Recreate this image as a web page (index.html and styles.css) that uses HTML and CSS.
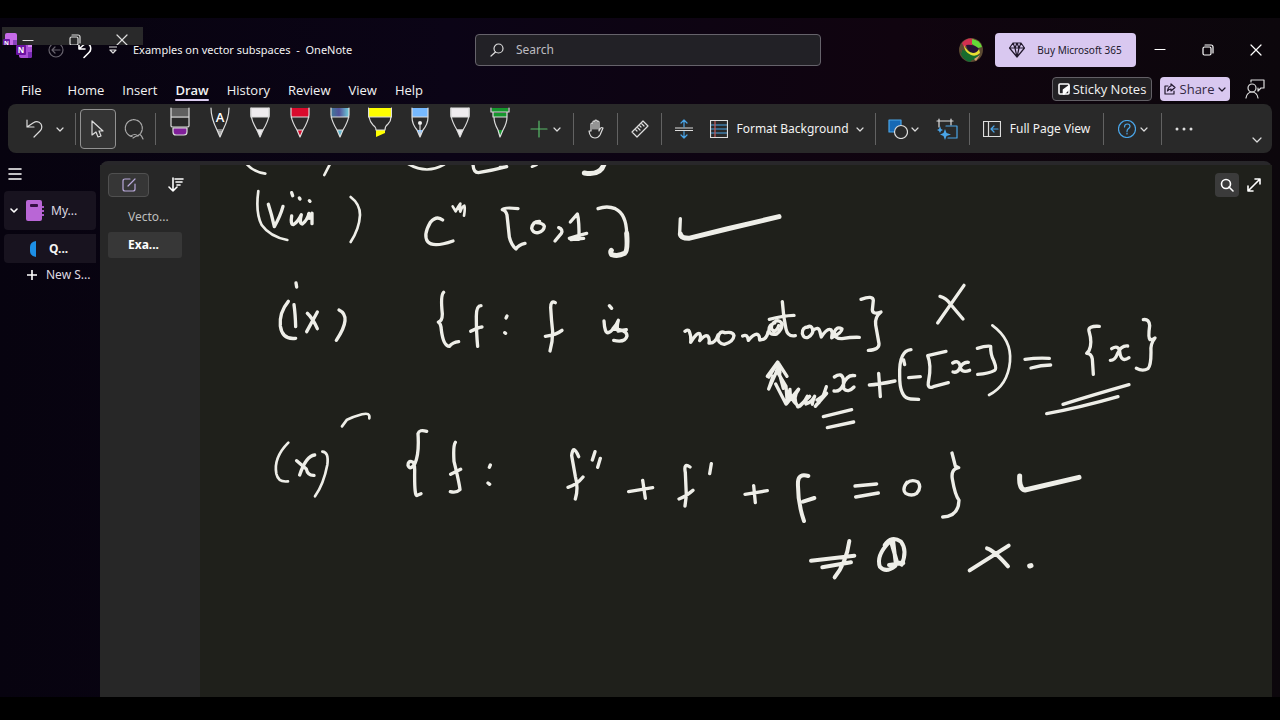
FILE: index.html
```html
<!DOCTYPE html>
<html lang="en">
<head>
<meta charset="utf-8">
<title>Examples on vector subspaces - OneNote</title>
<link rel="stylesheet" href="styles.css">
</head>
<body>
<div class="app">
  <header class="titlebar">
    <div class="title-left">
      <svg class="logo" width="16" height="16" viewBox="0 0 16 16"><rect x="3" width="13" height="16" rx="2" fill="#a94fd6"/><path d="M12 0h2a2 2 0 0 1 2 2v3h-4z" fill="#d58af4"/><path d="M12 10h4v4a2 2 0 0 1-2 2h-2z" fill="#7a2bb5"/><rect y="3" width="10" height="10" rx="1" fill="#6a11a0"/><text x="5" y="11" class="logo-n">N</text></svg>
      <button class="plain back" aria-label="Back"><svg width="16" height="16" viewBox="0 0 16 16" class="ln dim"><circle cx="8" cy="8" r="7"/><path d="M12 8H4M7 5 4 8l3 3"/></svg></button>
      <button class="plain undo-top" aria-label="Undo"><svg width="18" height="18" viewBox="0 0 18 18" class="ln thick"><path d="M3 2v6h6M3 8 8 3.500q4-2 6 1 2 4-1 7l-5 5"/></svg></button>
      <button class="plain more-top" aria-label="Customize toolbar"><svg width="8" height="8" viewBox="0 0 8 8" class="ln"><path d="M0 1h8M1 4h6L4 7z"/></svg></button>
      <span class="doc-title">Examples on vector subspaces&nbsp; -&nbsp; OneNote</span>
    </div>
    <label class="search">
      <svg width="14" height="14" viewBox="0 0 14 14" class="ln"><circle cx="8.500" cy="5.500" r="4.500"/><path d="M5.500 9 1 13"/></svg>
      <input type="text" placeholder="Search" aria-label="Search">
    </label>
    <div class="title-right">
      <svg class="avatar" width="24" height="24" viewBox="0 0 24 24"><circle cx="12" cy="12" r="12" fill="#5c4a32"/><path d="M3 5Q8-1 15 1l-2 6-8 2z" fill="#d32f50"/><path d="M13 1q8 1 10 8l-4 1-6-4z" fill="#64d838"/><path d="M7 7q8-1 13 4l-2 7Q9 15 7 7z" fill="#261235"/><path d="M1 13q5 8 13 8l-3 3Q3 22 1 13z" fill="#146b32"/><path d="M3 12q8 1 17 6l-5 4q-8 0-12-6z" fill="#176b2d"/><path d="M5 7q3 7 9 8 4 0 6-4l1 4q-4 4-9 2-7-3-7-10z" fill="#e8df32"/><path d="M15 21l6-4-4 6z" fill="#db9c70"/></svg>
      <button class="buy"><svg width="16" height="16" viewBox="0 0 16 16" class="ln dark"><path d="M4 1h8l3.500 5L8 15 .5 6zM.5 6h15M4 1l2 5 2 9 2-9 2-5M6 6l2-5 2 5"/></svg>Buy Microsoft 365</button>
      <button class="win" aria-label="Minimize"><svg width="12" height="12" viewBox="0 0 12 12" class="ln"><path d="M1 5.500h10"/></svg></button>
      <button class="win" aria-label="Restore"><svg width="12" height="12" viewBox="0 0 12 12" class="ln"><rect x="1" y="3" width="8" height="8" rx="1.500"/><path d="M3 1h6q2 0 2 2v6"/></svg></button>
      <button class="win" aria-label="Close"><svg width="12" height="12" viewBox="0 0 12 12" class="ln"><path d="m1 1 10 10M11 1 1 11"/></svg></button>
    </div>
    <div class="ghost">
      <svg width="14" height="14" viewBox="0 0 14 14"><rect x="2" width="12" height="13" rx="2" fill="#c66be9"/><path d="M10 7h4v6h-4z" fill="#8a42bd"/><rect y="6" width="7" height="7" rx="1" fill="#6515a0"/><text x="3.500" y="12" class="logo-n mini">N</text></svg>
      <svg width="12" height="12" viewBox="0 0 12 12" class="ln"><path d="M1 6.500h10"/></svg>
      <svg width="12" height="12" viewBox="0 0 12 12" class="ln"><rect x="1" y="3" width="8" height="8" rx="1.500"/><path d="M3 1h6q2 0 2 2v6"/></svg>
      <svg width="12" height="12" viewBox="0 0 12 12" class="ln"><path d="m1 1 10 10M11 1 1 11"/></svg>
    </div>
  </header>

  <div class="menubar">
    <nav class="tabs">
      <button class="tab tab-file">File</button><button class="tab">Home</button><button class="tab">Insert</button><button class="tab active">Draw</button><button class="tab">History</button><button class="tab">Review</button><button class="tab">View</button><button class="tab">Help</button>
    </nav>
    <div class="menu-actions">
      <button class="sticky"><svg width="12" height="12" viewBox="0 0 12 12" class="ln thick"><rect x="1" y="1" width="10" height="10" rx="1"/><path d="M5.500 11V7L11 3v3l-5 5z" fill="#fff"/></svg>Sticky Notes</button>
      <button class="share"><svg width="12" height="12" viewBox="0 0 12 12" class="ln dark"><path d="M4 3H1v8h9V8"/><path d="M7 1v2Q4 4 3.500 8 5 6 7 6v2l4-3.500z"/></svg>Share<svg width="8" height="8" viewBox="0 0 8 8" class="ln dark"><path d="m1 3 3 3 3-3"/></svg></button>
      <button class="plain people" aria-label="Feedback"><svg width="20" height="20" viewBox="0 0 20 20" class="ln"><circle cx="7" cy="9" r="4"/><path d="M1 19q1-6 6-6t6 6M6 3V1h13v8h-3l-3 3V9"/></svg></button>
    </div>
  </div>

  <div class="ribbon">
    <button class="tool w28" aria-label="Undo"><svg width="20" height="20" viewBox="0 0 20 20" class="ln"><path d="M3 1v7h7M3 8l6-4q5-3 8 1 2 4-1 7l-6 6"/></svg></button>
    <button class="tool w24" aria-label="Undo history"><svg width="8" height="8" viewBox="0 0 8 8" class="ln"><path d="m1 3 3 3 3-3"/></svg></button>
    <i class="sep"></i>
    <button class="tool select" aria-label="Select"><svg width="16" height="20" viewBox="0 0 16 20" class="ln"><path d="M2 2v14l4-3 2 5 3-1-2-5h4z"/></svg></button>
    <button class="tool lasso" aria-label="Lasso select"><svg width="22" height="22" viewBox="0 0 22 22" class="ln soft"><path d="M9 18.500A8.500 8.500 0 1 1 17 16" stroke-dasharray="3 1"/><path d="M8 18q4-3 7 0 2-4 5 3M10 20q3-2 4-2"/></svg></button>
    <i class="sep"></i>
    <div class="pens">
      <button class="tool pen" aria-label="Eraser"><svg width="24" height="32" viewBox="0 0 24 32" class="ln"><path d="M3 1h18v10H3z" fill="#606060" stroke="none"/><path d="M5 21h14v4q0 3-3 3H8q-3 0-3-3z" fill="#80209a"/><path d="M3 1v18q0 1 2 1h14q2 0 2-1V1M3 10h18"/></svg></button>
      <button class="tool pen" aria-label="Text pen"><svg width="24" height="32" viewBox="0 0 24 32" class="ln"><path d="M9.500 24h5L12 30z" fill="#aaa" stroke="none"/><path d="M3 1q0 10 6 22h6q6-12 6-22M9 23l3 7 3-7"/><text x="12" y="15" class="pen-a">A</text></svg></button>
      <button class="tool pen" aria-label="White pen"><svg width="24" height="32" viewBox="0 0 24 32" class="ln"><path d="M3 1h18v9H3zM9 23h6l-3 7z" fill="#efecef"/><path d="M3 1v7q1 7 6 15h6q5-8 6-15V1"/></svg></button>
      <button class="tool pen" aria-label="Red pen"><svg width="24" height="32" viewBox="0 0 24 32" class="ln"><path d="M3 1h18v9H3zM9 23h6l-3 7z" fill="#d90a2c" stroke="none"/><path d="M3 1v7q1 7 6 15h6q5-8 6-15V1M3 10h18M9 23l3 7 3-7"/></svg></button>
      <button class="tool pen" aria-label="Galaxy pen"><svg width="24" height="32" viewBox="0 0 24 32" class="ln"><defs><linearGradient id="galaxy"><stop stop-color="#417b9b"/><stop offset=".45" stop-color="#52509a"/><stop offset="1" stop-color="#71d1dc"/></linearGradient></defs><path d="M3 1h18v9H3z" fill="url(#galaxy)" stroke="none"/><path d="M9 23h6l-3 7z" fill="#62b8d0" stroke="none"/><path d="M3 1v7q1 7 6 15h6q5-8 6-15V1M3 10h18M9 23l3 7 3-7"/></svg></button>
      <button class="tool pen" aria-label="Yellow highlighter"><svg width="24" height="32" viewBox="0 0 24 32" class="ln"><path d="M0 1h24v9H0zM8 23h9v3l-9 4z" fill="#ffff00" stroke="none"/><path d="M.5 1v9h23V1M1 10q1 5 4 8 3 2 3 5h9q0-4 3-6 3-3 3-7"/></svg></button>
      <button class="tool pen" aria-label="Fountain pen"><svg width="24" height="32" viewBox="0 0 24 32" class="ln"><path d="M4 1h16v9H4zM9 23h6l-3 7z" fill="#76b9ff" stroke="none"/><path d="M4 1v9h16V1M4 10q0 7 5 13l3 7 3-7q5-6 5-13M12 18v11"/><circle cx="12" cy="16" r="1.500" fill="#fff"/></svg></button>
      <button class="tool pen" aria-label="White pen 2"><svg width="24" height="32" viewBox="0 0 24 32" class="ln"><path d="M3 1h18v9H3zM9 23h6l-3 7z" fill="#efecef"/><path d="M3 1v7q1 7 6 15h6q5-8 6-15V1"/></svg></button>
      <button class="tool pen" aria-label="Green pen"><svg width="24" height="32" viewBox="0 0 24 32" class="ln"><path d="M4 1h16v4H4zM5 6h14v4H5zM10 23h5l-3 7z" fill="#15962d" stroke="none"/><path d="M3 1v4h18V1M5 5v5h14V5M6 10q0 6 4 13l2 7 3-7q4-7 4-13"/></svg></button>
    </div>
    <button class="tool add" aria-label="Add pen"><svg width="18" height="18" viewBox="0 0 18 18" class="ln green"><path d="M9 1v16M1 9h16"/></svg><svg width="8" height="8" viewBox="0 0 8 8" class="ln"><path d="m1 3 3 3 3-3"/></svg></button>
    <i class="sep"></i>
    <button class="tool" aria-label="Pan"><svg width="16" height="20" viewBox="0 0 16 20" class="ln"><path d="M3 12V5q0-1 1-1t1 1v5V3q0-1 1-1t1 1v7V2q0-1 1-1t1 1v8V3q0-1 1-1t1 1v9l1-2q1-2 3-1l-3 7q-2 3-5 3-5 0-6-7z"/></svg></button>
    <i class="sep"></i>
    <button class="tool" aria-label="Ruler"><svg width="20" height="20" viewBox="0 0 20 20" class="ln"><path d="m2 13 11-11 5 5L7 18zM5 10l2 2M7 8l3 3M9 6l2 2M11 4l3 3"/></svg></button>
    <i class="sep"></i>
    <button class="tool" aria-label="Insert space"><svg width="18" height="20" viewBox="0 0 18 20" class="ln"><path d="M0 9h18M0 11.500h18"/><path class="blue" d="M9 8V1M6 4l3-3 3 3M9 12.500V19M6 16l3 3 3-3"/></svg></button>
    <button class="tool format"><svg width="18" height="18" viewBox="0 0 18 18" class="ln"><path class="blue" d="M1 5h16M1 9h16M1 13h16"/><path class="red" d="M5 1v16"/><rect x=".5" y=".5" width="17" height="17"/></svg>Format Background<svg width="8" height="8" viewBox="0 0 8 8" class="ln"><path d="m1 3 3 3 3-3"/></svg></button>
    <i class="sep"></i>
    <button class="tool shapes" aria-label="Shapes"><svg width="20" height="20" viewBox="0 0 20 20" class="ln"><rect x="1" y="1" width="12" height="12" fill="#1769b5" class="blue"/><circle cx="13" cy="13" r="6.500" fill="#292929"/></svg><svg width="8" height="8" viewBox="0 0 8 8" class="ln"><path d="m1 3 3 3 3-3"/></svg></button>
    <button class="tool convert" aria-label="Ink to shape"><svg width="22" height="22" viewBox="0 0 22 22" class="ln"><path d="M1 3h16M3 1v8M15 1v6"/><path class="blue" d="M10 8h11v12H12"/><path d="m9 11 1.500 4L15 16.500 10.500 18 9 22l-1.500-4L4 16.500 7.500 15zM4 8l1 3 2 1-2 1-1 2-1-2-2-1 2-1z" fill="#4aa5e8" stroke="none"/></svg></button>
    <i class="sep"></i>
    <button class="tool fullpage"><svg width="18" height="18" viewBox="0 0 18 18" class="ln"><rect x=".5" y="1.500" width="17" height="15"/><path d="M5.500 2v14"/><path class="blue" d="M15 9H8M11 6 8 9l3 3"/></svg>Full Page View</button>
    <i class="sep"></i>
    <button class="tool help" aria-label="Help"><svg width="18" height="18" viewBox="0 0 18 18" class="ln"><g class="blue"><circle cx="9" cy="9" r="8.500"/><path d="M6.500 7q0-3 3-3 2.500 0 2.500 2.500 0 1-2 2.500-1 1-1 2.500M9 13v1"/></g></svg><svg width="8" height="8" viewBox="0 0 8 8" class="ln"><path d="m1 3 3 3 3-3"/></svg></button>
    <i class="sep"></i>
    <button class="tool" aria-label="More options"><svg width="18" height="4" viewBox="0 0 18 4" fill="#ddd"><circle cx="2" cy="2" r="1.500"/><circle cx="9" cy="2" r="1.500"/><circle cx="16" cy="2" r="1.500"/></svg></button>
    <button class="tool collapse" aria-label="Collapse ribbon"><svg width="10" height="8" viewBox="0 0 10 8" class="ln"><path d="m1 2 4 4 4-4"/></svg></button>
  </div>

  <main class="workspace">
    <aside class="notebooks">
      <button class="plain burger" aria-label="Navigation"><svg width="14" height="12" viewBox="0 0 14 12" class="ln thick"><path d="M1 1h12M1 6h12M1 11h12"/></svg></button>
      <button class="book"><svg width="8" height="8" viewBox="0 0 8 8" class="ln thick"><path d="m1 2 3 3 3-3"/></svg><svg width="18" height="22" viewBox="0 0 18 22"><rect width="16" height="21" rx="2" fill="#b966d6"/><rect x="4" y="4" width="8" height="3" rx="1" fill="#351144"/><path d="M17 6v2M17 10v2M17 14v2" stroke="#a95ac7" stroke-width="2"/></svg><span>My...</span></button>
      <button class="section"><svg width="6" height="16" viewBox="0 0 6 16"><path d="M6 0Q0 1 0 6v4q0 5 6 6z" fill="#1d8fe6"/></svg><span>Q...</span></button>
      <button class="new-section"><svg width="10" height="10" viewBox="0 0 10 10" class="ln thick"><path d="M5 0v10M0 5h10"/></svg><span>New S...</span></button>
    </aside>
    <div class="notebody">
      <aside class="pages">
        <div class="page-tools">
          <button class="new-page" aria-label="Add page"><svg width="14" height="14" viewBox="0 0 14 14" class="ln lilac"><path d="M8 1H3Q1 1 1 3v8q0 2 2 2h8q2 0 2-2V6M6 8l7-7"/></svg></button>
          <button class="plain sort" aria-label="Sort pages"><svg width="16" height="16" viewBox="0 0 16 16" class="ln thick"><path d="M5 1v13M1 10l4 4 4-4M7 2h8M8 5h6M9 8h3"/></svg></button>
        </div>
        <button class="page">Vecto...</button>
        <button class="page current">Exa...</button>
      </aside>
      <section class="canvas">
        <svg class="ink" width="1072" height="532" viewBox="200 165 1072 532" role="img" aria-label="Handwritten list of function sets">
          <g transform="translate(240 160) scale(.33333)">
            <path d="M20 12Q40 36 76 41M270 12 253 45M505 12Q560 44 612 14"/>
            <path class="bold" d="M699 12Q700 38 715 38 755 32 800 20"/>
            <path d="M55 93Q46 158 65 195 90 230 142 240M332 111Q360 132 360 165 358 206 332 246"/>
            <path class="bold" d="M85 133Q95 164 103 200 121 168 129 139M155 98l3 9M178 114l2 3M208 122l2 2M155 168Q151 194 160 194 174 185 184 164 177 192 187 192 202 180 207 160 203 190 216 160V191"/>
            <path class="bold" d="M608 180Q590 165 571 187 549 225 563 245 579 264 639 243"/>
            <path d="M638 139l9 15q8-15 14-23-3 18 0 24 4-14 12-18 3 8-1 30"/>
            <path class="bold" d="M834 146Q790 141 787 149 797 151 801 165L808 231q6 25 20 36 7-12 27-17"/>
            <path class="bold" d="M168 369l2 12M145 424Q117 458 121 498 127 540 167 535M162 434q4 28 5 66M232 456 200 515M202 460Q218 475 232 506M297 450Q337 469 289 541"/>
            <path class="bold" d="M611 397q-10 9-4 65 0 21-12 24 8 5 9 24 6 48 24 49 10-12 28-14M723 437q-14 0-14 32 0 51 4 90M692 514q23-12 34-13M801 468l-3 6M794 518l3 2"/>
          </g>
          <g transform="translate(500 160) scale(.33333)">
            <path d="M96 20 110 14M0 21h12"/><path class="heavy" d="M253 39Q302 48 313 10"/>
            <path class="bold" d="M119 184Q98 183 95 205 99 220 115 218 132 213 133 199 130 189 108 188M176 203q14 5 8 17l-19 23M211 186 232 162q6 21 5 76M208 235q27-9 52-15M213 239l38-4"/>
            <path class="bold" d="M294 146Q321 136 346 146 379 162 380 220"/><path class="heavy" d="M380 220Q384 272 374 280 355 290 335 284q-5-8-1-13"/>
            <path class="bold" d="M541 176l-2 44q1 13 16 14"/><path class="heavy" d="M541 222q2 13 25 13L680 207 837 170"/>
            <path class="bold" d="M166 428q-14-8-14 15 2 37 6 72 0 30-8 58M136 529q34-5 50-18M328 437l7 8M312 483q2 37 13 35 16-6 30-37-6 22-1 32l25-4M353 488l-15 19q43 1 43 21-6 21-40 13"/>
            <path class="bold" d="M555 514q10-7 13 0 6 15 4 33 19-31 27-26 5 9 0 21 17-18 24-14 7 7 4 21 19 2 27-24M675 518q-17-8-21 16-1 15 19 19 27-7 29-26-3-13-25-9M728 528q15-7 17 13 17-20 27-18 7 3 7 17 21 0 25-24M847 425q3 45 11 82 5 24 28 20M808 478q39-11 74-12M824 489q-19 5-17 25 5 12 23 8 21-17 14-34-9-11-23 0-14 14 0 26 11-3 15-17"/>
          </g>
          <g transform="translate(740 270) scale(.33333)">
            <path class="bold" d="M205 171q-19 0-18 20 4 15 17 11 17-10 14-24-4-13-15-8M218 182q18-15 22 4l4 15q17-28 29-22 7 10 2 22M275 203q31-15 31-26-15-10-23 9 0 21 23 20 30-5 52-4M363 88Q399 75 400 91L397 120q2 15 26 6-20 16-16 39l10 56q1 19-32 20"/>
            <path class="bold" d="M600 79q19 5 31 23l38 45M672 46 593 159"/>
            <path class="bold" d="M114 277 86 321M82 319 113 276 141 319M113 280l7 28M86 357l28-62 16 60M86 357l13-38M110 302l28 47 4 50M107 342l31 60M150 358l-11 44 36-44M150 360q-2 26 26 50M176 358q-20 24-3 52 18-8 29-31-6 17-4 23 18-6 26-23-7 16-7 24M180 408l29-29M229 404q17-10 30-54M231 390l29-20-34 39"/>
            <path class="bold" d="M283 321q22-15 27 6l1 29q13 14 31-5M344 317q-23-4-34 26-9 23-28 20M388 345q25-1 77-12M416 310l5 70M250 440 335 419M262 473l79-17M513 239q-36 3-34 76-1 70 33 72l24 1M491 270l3 14M506 323l35-3M618 244 563 257Q575 286 566 331 560 359 580 350L625 338M638 279q17-10 22 7 1 25 29 15M685 277q-17-2-28 21-6 11-18 8M712 235q25-8 40-6-1 24 10 45 9 23 2 27-18 10-51 12"/>
            <path d="M757 166Q816 209 810 275 803 347 747 375"/>
            <path class="bold" d="M855 268q35-5 73-3M873 294q30-9 59-9M1078 169q-35-2-31 14 11 37 0 59l-7 8q14 0 17 17l3 46M1115 236q20-12 24 8 4 36 28 19M1163 228q-20-2-31 24-7 19-21 19M1210 149q18-3 19 18-5 35 1 42 10 0 15-5-15 18-12 43 0 40-9 49-16 9-35-1M920 431q99-18 214-51M969 403q93-29 198-59"/>
          </g>
          <g transform="translate(260 400) scale(.33333)">
            <path d="M246 79l15-20q20-9 45-16 25-7 22 12M85 128Q40 173 49 221q6 27 35 23M187 155q20 1 15 39-11 58-37 95"/>
            <path class="bold" d="M110 182l29 25q4 20 23 19M164 165q-26 3-45 60M500 94q-22-7-26 7 4 60-9 89-14 23-21 6 0-14 11-11 10 1 9 30-1 79 8 71l11-5M586 127q-7 10-4 57 16 65 18 85-11 11-29 6M572 223l30-15M691 195l-3 7M684 249l5 4M956 170q-17-40-21-3l11 62q10 36 0 68M924 262q27-8 45-31M1005 155l-8 25M1021 175l-8 27"/>
          </g>
          <g transform="translate(600 430) scale(.33333)">
            <path class="bold" d="M86 185 158 173M128 151l8 54M270 111q-20-14-14 17l3 68-4 32M237 207q24-9 42-26M334 101l-5 30M435 193l67-11M461 167l5 51M765 168l65-6M767 201l68-12M921 157q-16 22-4 33 18 10 33 0 16-18 4-34-20-10-34 4M1056 69l10 39 10 5q-24 4-19 34 8 48 20 64-1 48-49 50"/>
            <path class="medium" d="M625 138q-29-9-31 17-2 60 18 118M609 215l34-11"/>
            <path class="heavy" d="M1259 138q-2 40 16 42L1437 142"/>
            <path class="medium" d="M633 392 763 377M667 412 753 397M748 333q-9 65-44 109M869 335q-42 42-29 76 18 19 46-3M854 345q20-30 49-10 20 27 2 69M875 341l16 55M879 330l8 67 23 2-43 6M1161 355q22 7 63 54M1226 347 1109 421"/><path class="heavy" d="M1289 408l4-1"/>
          </g>
        </svg>
        <div class="canvas-tools">
          <button class="find" aria-label="Search page"><svg width="14" height="14" viewBox="0 0 14 14" class="ln thick"><circle cx="6" cy="6" r="4.500"/><path d="m9 9 4 4"/></svg></button>
          <button class="plain expand" aria-label="Expand"><svg width="14" height="14" viewBox="0 0 14 14" class="ln thick"><path d="M1 13 13 1M8 1h5v5M1 8v5h5"/></svg></button>
        </div>
      </section>
    </div>
  </main>
</div>
</body>
</html>
```
FILE: styles.css
```css
* { box-sizing: border-box; }
body {
  margin: 0;
  min-height: 100vh;
  padding: 18px 0 23px;
  display: flex;
  background: #000;
  color: #f2f2f2;
  font: 12px/16px "Noto Sans", "Open Sans", sans-serif;
}
button {
  display: inline-flex;
  align-items: center;
  margin: 0;
  padding: 0;
  border: 0;
  background: none;
  color: inherit;
  font: inherit;
  white-space: nowrap;
}
svg { display: block; flex: none; }
.plain, .win, .tool { justify-content: center; }
.ln { fill: none; stroke: #ddd; stroke-width: 1.2; stroke-linejoin: round; stroke-linecap: round; }
.thick { stroke: #fff; stroke-width: 1.6; }
.dark { stroke: #21182c; }
.dim { stroke: #67636d; }
.soft { stroke: #aaa; }
.green { stroke: #58bc69; }
.lilac { stroke: #b9a9db; }
.blue { stroke: #4aa5e8; }
.red { stroke: #c85b5b; }
.logo-n { font: bold 8px "Noto Sans", sans-serif; fill: #fff; text-anchor: middle; }
.mini { font-size: 6px; }
.pen-a { font: 600 13px "Open Sans", sans-serif; fill: #fff; stroke: none; text-anchor: middle; }

.app {
  flex: 1;
  min-width: 0;
  display: flex;
  flex-direction: column;
  background: linear-gradient(90deg, #07030f 0%, #0b0416 35%, #10040f 70%, #0c070c 100%);
}

/* Title bar */
.titlebar {
  position: relative;
  display: grid;
  grid-template-columns: minmax(0, 1fr) 346px minmax(0, 1fr);
  align-items: center;
  height: 59px;
  padding: 5px 0 0 16px;
}
.title-left { display: flex; align-items: center; }
.back { width: 16px; margin-left: 16px; }
.undo-top { width: 18px; margin-left: 12px; }
.more-top { width: 8px; margin: 0 16px 0 15px; }
.doc-title { white-space: nowrap; font-size: 11px; }
.search {
  display: flex;
  align-items: center;
  gap: 12px;
  height: 32px;
  padding: 0 14px;
  border: 1px solid #66636b;
  border-radius: 4px;
  background: #222126;
}
.search input {
  flex: 1;
  min-width: 0;
  padding: 0;
  border: 0;
  outline: 0;
  background: none;
  color: #fff;
  font: inherit;
}
.search input::placeholder { color: #bdbbc0; opacity: 1; }
.title-right { display: flex; align-items: center; justify-content: flex-end; }
.avatar { margin-right: 12px; }
.buy {
  justify-content: center;
  gap: 12px;
  width: 141px;
  height: 34px;
  border-radius: 4px;
  background: #d9c8f0;
  color: #21182c;
  font-size: 10px;
}
.win { width: 48px; height: 34px; }
.win .ln { stroke: #fff; }
.ghost {
  position: absolute;
  top: 9px;
  left: 2px;
  display: flex;
  align-items: center;
  width: 141px;
  height: 18px;
  padding: 7px 0 0 1px;
  overflow: hidden;
  background: #29292a;
}
.ghost svg { margin-right: 5px; }
.ghost svg + svg { margin-right: 35px; }

/* Tabs */
.menubar {
  display: flex;
  justify-content: space-between;
  height: 27px;
  padding: 0 14px 3px 12px;
}
.tabs, .menu-actions { display: flex; align-items: center; }
.tab { position: relative; height: 24px; padding: 2px 9px 0; font: 13px/16px "Open Sans", sans-serif; }
.tab-file { margin-right: 8px; }
.tab.active { font-weight: 600; }
.active::after {
  content: "";
  position: absolute;
  right: 9px;
  bottom: 0;
  left: 9px;
  height: 2px;
  border-radius: 1px;
  background: #dccdf0;
}
.sticky, .share { height: 24px; border-radius: 4px; justify-content: center; font: 13px/16px "Open Sans", sans-serif; }
.sticky { gap: 3px; width: 100px; border: 1px solid #636066; background: #232225; }
.share { gap: 4px; width: 70px; margin: 0 14px 0 8px; background: #d9c8f0; color: #332943; }
.people { width: 22px; }

/* Ribbon */
.ribbon {
  display: flex;
  align-items: center;
  height: 49px;
  margin: 0 8px;
  padding: 0 8px 0 12px;
  border-radius: 8px;
  background: #292929;
}
.tool { width: 37px; height: 40px; flex: none; }
.w28 { width: 28px; }
.w24 { width: 24px; }
.sep { flex: none; width: 1px; height: 32px; margin: 0 3px; background: #626262; }
.select { width: 36px; margin-left: 1px; border: 1px solid #929292; border-radius: 4px; background: #343434; }
.lasso { width: 36px; }
.pens { display: flex; align-items: center; margin-left: 1px; }
.pen { width: 40px; height: 44px; align-items: flex-start; }
.add { width: 50px; gap: 5px; }
.format { width: 170px; gap: 8px; }
.format svg:last-child { margin-left: -1px; }
.shapes { width: 48px; gap: 3px; }
.convert { width: 39px; }
.fullpage { width: 127px; gap: 9px; }
.help { width: 51px; gap: 4px; }
.collapse { width: 14px; margin-left: auto; padding-bottom: 5px; align-items: flex-end; }

/* Workspace */
.workspace { flex: 1; display: flex; margin: 8px 8px 0 0; min-height: 320px; }
.notebooks { flex: none; width: 100px; padding: 0 4px; }
.notebooks button { width: 100%; }
.notebooks .burger { display: flex; width: 22px; height: 26px; }
.notebooks .book {
  height: 39px;
  margin-top: 4px;
  padding-left: 6px;
  gap: 7px;
  border-radius: 4px;
  background: #18131f;
}
.notebooks .book svg + svg { margin-left: 1px; }
.notebooks .section {
  height: 29px;
  margin-top: 4px;
  padding-left: 26px;
  gap: 13px;
  border-radius: 4px 0 0 4px;
  background: #18131f;
  font-weight: 700;
}
.notebooks .new-section { height: 24px; padding-left: 23px; gap: 9px; }
.new-section span, .book span { color: #ded9e2; }
.notebody {
  flex: 1;
  min-width: 0;
  display: flex;
  padding-top: 4px;
  border-radius: 8px 8px 0 0;
  background: #28272a;
}
.pages { flex: none; width: 100px; padding: 8px 18px 0 8px; background: #272727; }
.page-tools { display: flex; align-items: center; gap: 16px; height: 24px; }
.new-page {
  flex: none;
  justify-content: center;
  width: 41px;
  height: 24px;
  border: 1px solid #505050;
  border-radius: 4px;
  background: #363636;
}
.sort { flex: none; width: 22px; }
.page { width: 100%; height: 26px; padding-left: 20px; border-radius: 3px; color: #bdbdbd; }
.page-tools + .page { margin-top: 7px; }
.page + .page { margin-top: 2px; }
.current { background: #373737; color: #fff; font-weight: 700; }
.canvas { position: relative; flex: 1; min-width: 0; overflow: hidden; background: #1f201b; }
.ink {
  position: absolute;
  top: 0;
  left: 0;
  fill: none;
  stroke: #eeeee8;
  stroke-width: 8;
  stroke-linecap: round;
  stroke-linejoin: round;
}
.bold { stroke-width: 10; }
.medium { stroke-width: 12; }
.heavy { stroke-width: 15; }
.canvas-tools {
  position: absolute;
  top: 8px;
  right: 8px;
  display: flex;
  align-items: center;
  gap: 5px;
}
.find { justify-content: center; width: 24px; height: 24px; border-radius: 4px; background: #3b3b3b; }
.expand { width: 20px; height: 24px; }
```
